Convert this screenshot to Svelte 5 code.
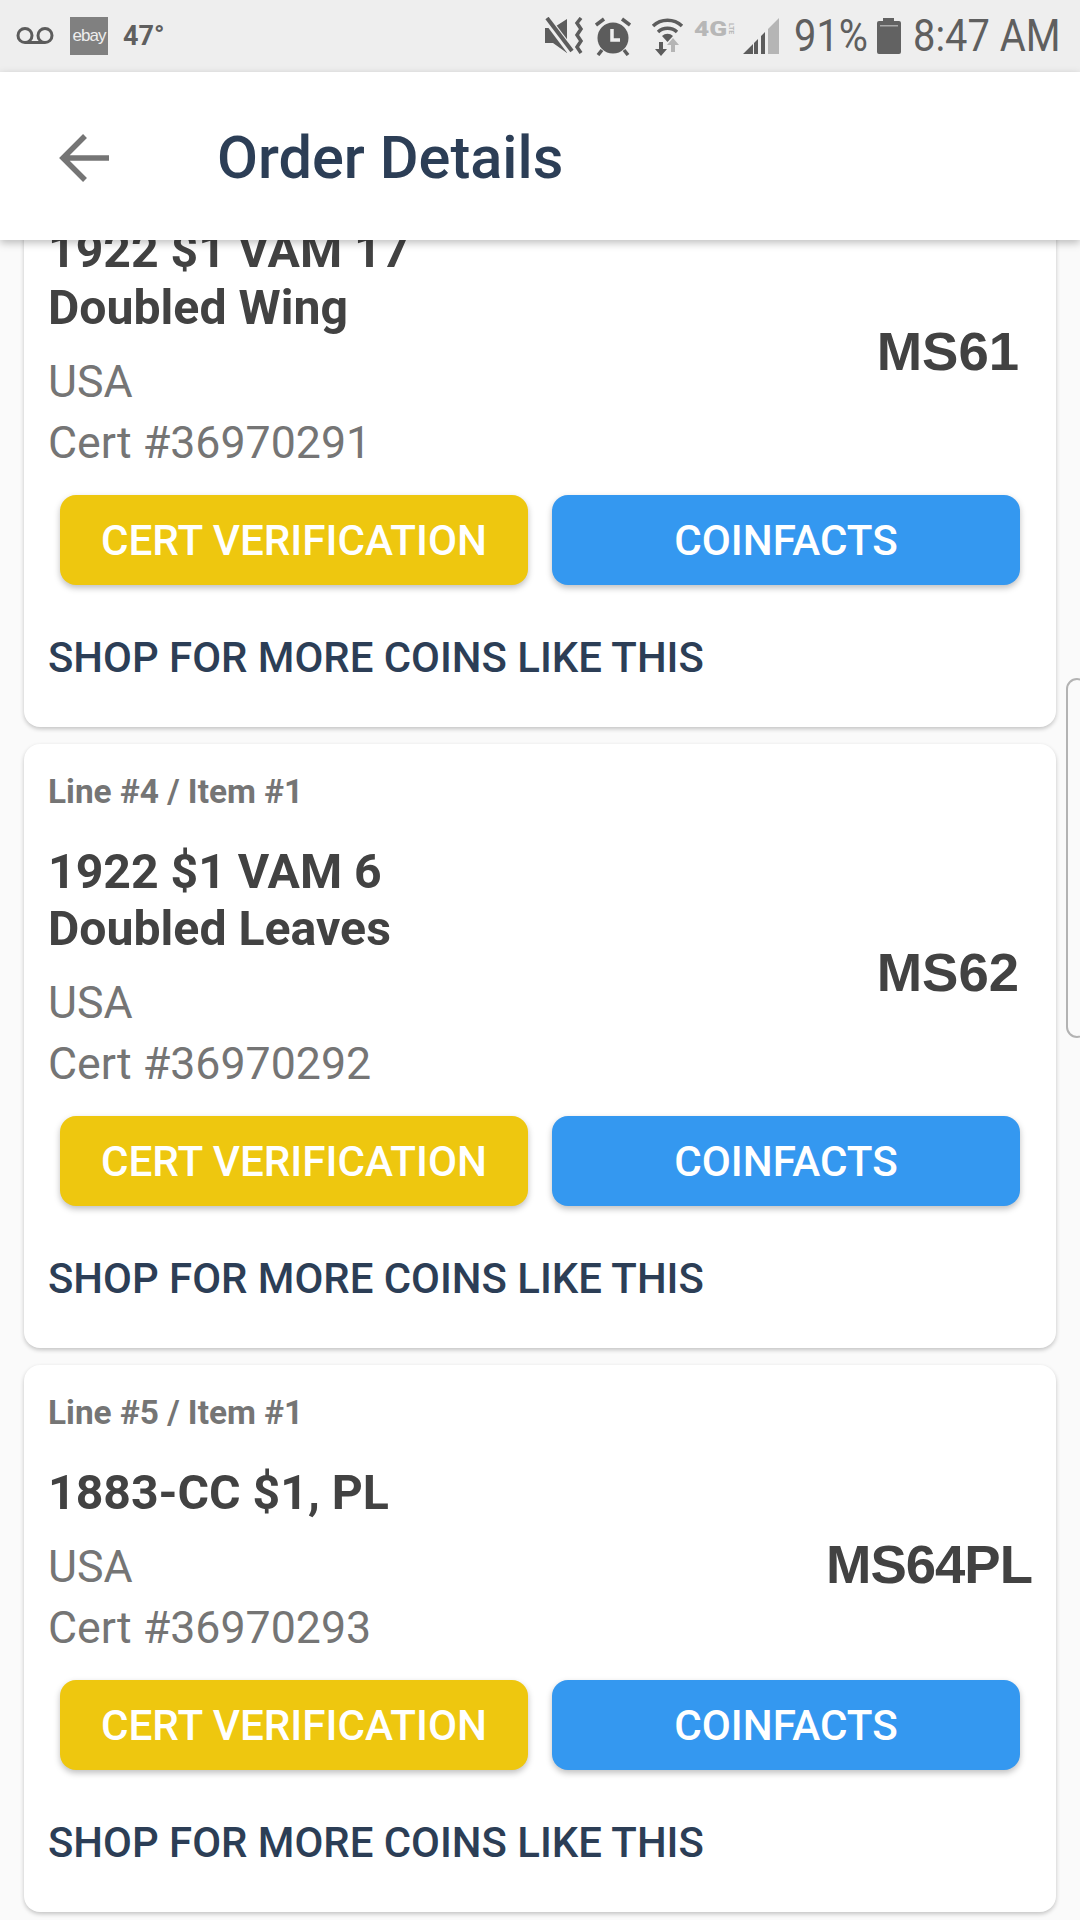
<script>
	const items = [
		{ line: 'Line #3 / Item #1', title: ['1922 $1 VAM 17', 'Doubled Wing'], cert: '36970291', grade: 'MS61' },
		{ line: 'Line #4 / Item #1', title: ['1922 $1 VAM 6', 'Doubled Leaves'], cert: '36970292', grade: 'MS62' },
		{ line: 'Line #5 / Item #1', title: ['1883-CC $1, PL'], cert: '36970293', grade: 'MS64PL' }
	];
</script>

<div class="screen">
	<div class="status">
		<div class="status-left">
			<svg width="38" height="18" viewBox="0 0 38 18">
				<circle cx="9" cy="8.5" r="7" fill="none" stroke="#5c5c5c" stroke-width="3"/>
				<circle cx="29" cy="8.5" r="7" fill="none" stroke="#5c5c5c" stroke-width="3"/>
				<rect x="9" y="14" width="20" height="3" fill="#5c5c5c"/>
			</svg>
			<div class="ebay">ebay</div>
			<span class="temp">47°</span>
		</div>
		<div class="status-right">
			<svg width="40" height="38" viewBox="0 0 40 38">
				<path d="M1 11h8l14-9v34L9 26H1z" fill="#5c5c5c"/>
				<path d="M2 1l27 36" stroke="#eee" stroke-width="8"/>
				<path d="M3 1l25 33" stroke="#5c5c5c" stroke-width="4"/>
				<path d="M37 1l-4 5 4 6-4 6 4 6-4 6 4 6" fill="none" stroke="#5c5c5c" stroke-width="3.5"/>
			</svg>
			<svg class="alarm" width="36" height="40" viewBox="0 0 36 40">
				<circle cx="18" cy="22" r="15.5" fill="#5c5c5c"/>
				<path d="M17 13v11h8" fill="none" stroke="#eee" stroke-width="3.5"/>
				<path d="M1 9l8-6M35 9l-8-6M7 34l-4 5M29 34l4 5" stroke="#5c5c5c" stroke-width="3.5"/>
			</svg>
			<svg class="wifi" width="33" height="40" viewBox="0 0 33 40">
				<path d="M2 10a21 21 0 0 1 29 0M7 16a14 14 0 0 1 19 0" fill="none" stroke="#5c5c5c" stroke-width="3.5"/>
				<path d="M11 20a8 8 0 0 1 11 0l-5.500 6z" fill="#5c5c5c"/>
				<path d="M8 26h4v7h4l-6 7-6-7h4z" fill="#5c5c5c"/>
				<path d="M20 36v-7h-4l6-7 6 7h-4v7z" fill="#b5b5b5"/>
			</svg>
			<div class="lte"><span class="lte-4g">4G</span><span class="lte-small">LTE</span></div>
			<svg class="signal" width="36" height="36" viewBox="0 0 36 36">
				<path d="M0 36l10-10v10zM11 25l4-4v15h-4zM18 18l4-4v22h-4z" fill="#5c5c5c"/>
				<path d="M25 11L36 0v36H25z" fill="#b5b5b5"/>
			</svg>
			<span class="pct">91%</span>
			<svg class="batt" width="24" height="36" viewBox="0 0 24 36">
				<path d="M6 0h11v3h5a2 2 0 0 1 2 2v29a2 2 0 0 1-2 2H2a2 2 0 0 1-2-2V5a2 2 0 0 1 2-2h4z" fill="#626262"/>
				<rect x="3" y="7" width="18" height="1.500" fill="#aaa"/>
			</svg>
			<span class="clock">8:47 AM</span>
		</div>
	</div>

	<div class="toolbar">
		<svg width="50" height="48" viewBox="0 0 50 48">
			<path d="M26 2L4 24l22 22M4 24h46" fill="none" stroke="#757575" stroke-width="5.5"/>
		</svg>
		<span class="heading">Order Details</span>
	</div>

	<div class="content">
		<div class="list">
			{#each items as item}
				<div class="card">
					<div class="line-no">{item.line}</div>
					<div class="info">
						<div>
							<div class="title">
								{#each item.title as t}
									<div>{t}</div>
								{/each}
							</div>
							<div class="meta">USA</div>
							<div class="meta">Cert #{item.cert}</div>
						</div>
						<div class="grade" class:long={item.grade.length > 4}>{item.grade}</div>
					</div>
					<div class="buttons">
						<div class="btn yellow">CERT VERIFICATION</div>
						<div class="btn blue">COINFACTS</div>
					</div>
					<div class="shop">SHOP FOR MORE COINS LIKE THIS</div>
				</div>
			{/each}
		</div>
		<div class="edge-handle"></div>
	</div>
</div>

<style>
	:global(body) {
		margin: 0;
		background: #fafafa;
	}
	.screen {
		width: 1080px;
		height: 1920px;
		display: flex;
		flex-direction: column;
		overflow: hidden;
		font-family: Roboto, sans-serif;
		background: #fafafa;
	}
	.status {
		height: 72px;
		flex: none;
		box-sizing: border-box;
		background: #eeeeee;
		display: flex;
		justify-content: space-between;
		align-items: center;
		padding: 0 21px 0 16px;
		color: #5f5f5f;
	}
	.status-left, .status-right {
		display: flex;
		align-items: center;
	}
	.ebay {
		width: 38px;
		height: 38px;
		margin-left: 16px;
		background: #808080;
		color: #eee;
		font-family: "Liberation Sans", sans-serif;
		font-size: 17px;
		letter-spacing: -1px;
		line-height: 38px;
		text-align: center;
	}
	.temp {
		font-size: 27px;
		font-weight: 700;
		margin-left: 15px;
	}
	.alarm { margin-left: 11px; }
	.wifi { margin-left: 20px; }
	.lte {
		display: flex;
		align-items: center;
		width: 41px;
		height: 16px;
		margin: -14px 0 0 10px;
		color: #b7b7b7;
	}
	.lte-4g {
		width: 33px;
		font-size: 21px;
		font-weight: 900;
		line-height: 16px;
		transform: scaleX(1.25);
		transform-origin: left;
	}
	.lte-small {
		writing-mode: vertical-rl;
		font-size: 7px;
		line-height: 7px;
		font-weight: 700;
	}
	.signal { margin-left: 8px; }
	.pct, .clock {
		font-size: 45px;
		line-height: 50px;
		white-space: nowrap;
		transform: scaleX(0.885);
		transform-origin: left;
	}
	.pct {
		width: 71px;
		margin-left: 15px;
	}
	.batt { margin-left: 12px; }
	.clock {
		width: 146px;
		margin-left: 12px;
	}
	.toolbar {
		height: 168px;
		flex: none;
		box-sizing: border-box;
		background: #fff;
		display: flex;
		align-items: center;
		padding: 3px 0 0 59px;
		box-shadow: 0 3px 8px rgba(0, 0, 0, 0.25);
		position: relative;
		z-index: 2;
	}
	.heading {
		font-size: 59.5px;
		font-weight: 500;
		color: #2c3e56;
		margin-left: 108px;
	}
	.content {
		flex: 1;
		position: relative;
		overflow: hidden;
	}
	.list {
		margin-top: -117px;
		display: flex;
		flex-direction: column;
		gap: 17px;
		padding: 0 24px;
	}
	.card {
		background: #fff;
		border-radius: 16px;
		box-shadow: 0 2px 4px rgba(0, 0, 0, 0.22);
		padding: 28px 0 0 24px;
	}
	.line-no {
		font-size: 33.4px;
		font-weight: 700;
		color: #757575;
		line-height: 40px;
	}
	.info {
		display: flex;
		align-items: center;
		justify-content: space-between;
		margin-top: 31px;
	}
	.title {
		font-size: 48.2px;
		font-weight: 700;
		color: #424242;
		line-height: 57px;
		margin-bottom: 16px;
	}
	.meta {
		font-size: 44.7px;
		color: #757575;
		line-height: 60.5px;
	}
	.grade {
		margin: 7px 37px 0 0;
		font-family: "Liberation Sans", sans-serif;
		font-weight: 700;
		font-size: 54.5px;
		color: #424242;
	}
	.grade.long {
		margin-right: 24px;
		letter-spacing: -1px;
	}
	.buttons {
		display: flex;
		gap: 24px;
		margin: 22px 0 0 12px;
	}
	.btn {
		width: 468px;
		height: 90px;
		border-radius: 16px;
		display: flex;
		align-items: center;
		justify-content: center;
		color: #fff;
		font-size: 42.2px;
		font-weight: 500;
	}
	.yellow {
		background: #eec70f;
		box-shadow: 0 3px 6px rgba(0, 0, 0, 0.25);
	}
	.blue {
		background: #3498f0;
		box-shadow: 0 3px 6px rgba(0, 0, 0, 0.25);
	}
	.shop {
		font-size: 41.9px;
		font-weight: 500;
		color: #2c3e56;
		line-height: 48px;
		margin-top: 49px;
		padding-bottom: 45px;
	}
	.edge-handle {
		position: absolute;
		right: -8px;
		top: 438px;
		width: 22px;
		height: 360px;
		box-sizing: border-box;
		border: 2px solid #b3b3b3;
		border-radius: 14px;
		background: #fafafa;
	}
</style>
